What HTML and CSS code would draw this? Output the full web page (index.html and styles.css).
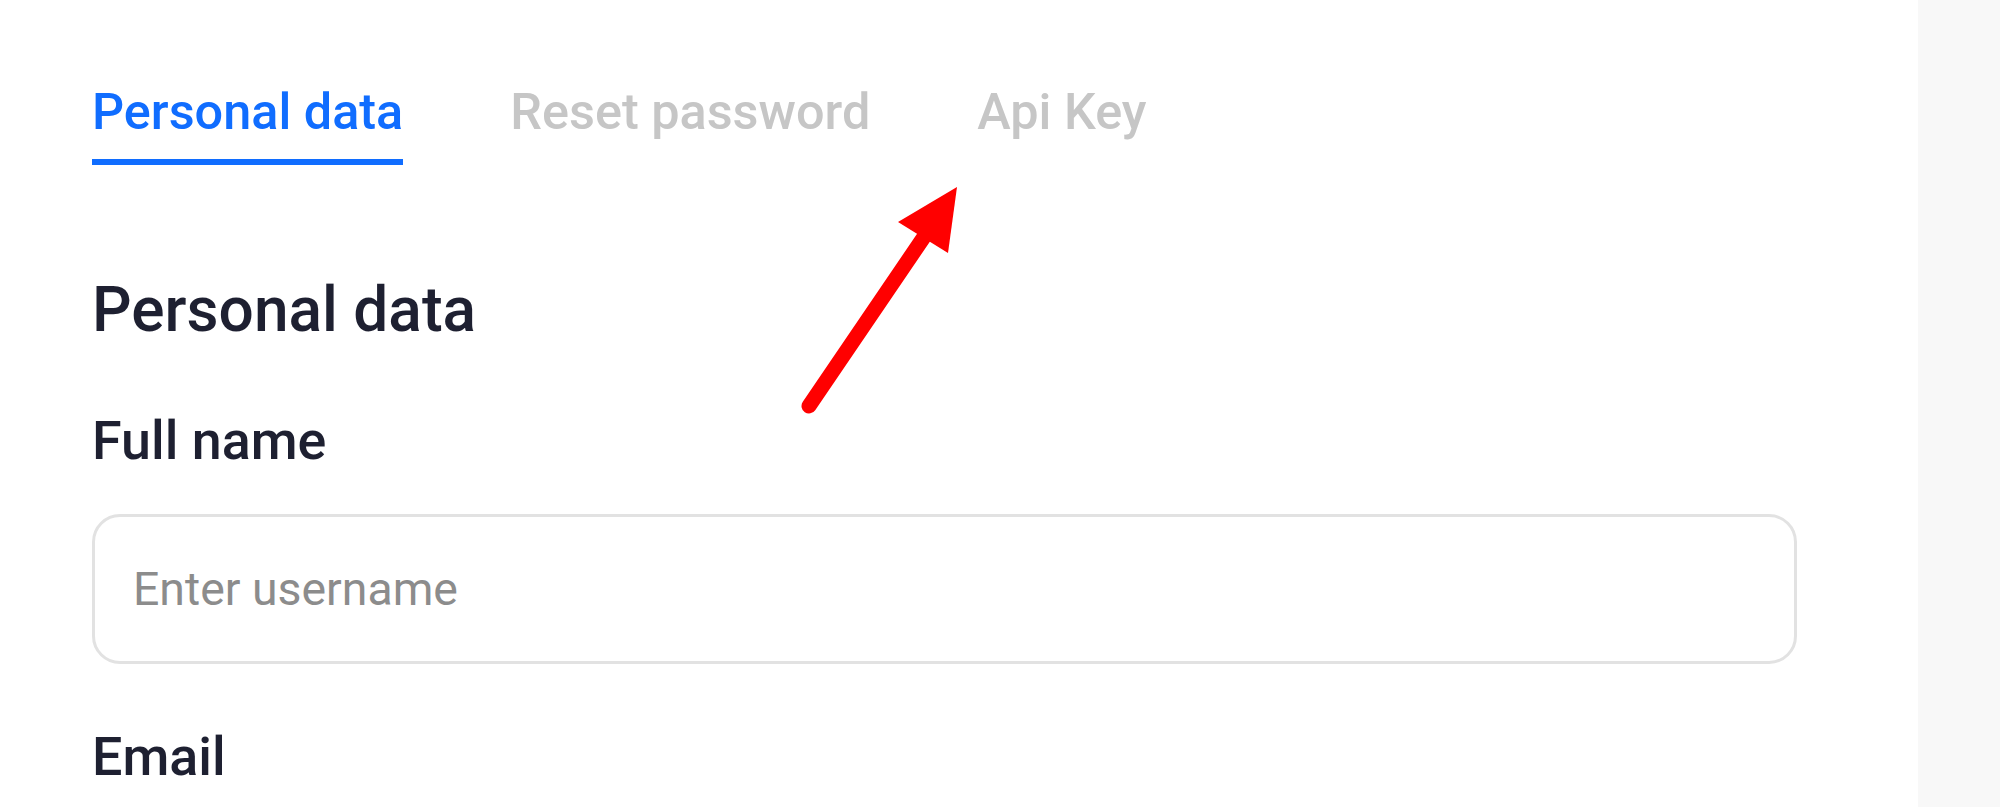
FILE: index.html
```html
<!DOCTYPE html>
<html lang="en">
<head>
  <meta charset="UTF-8">
  <title>Profile settings</title>
  <meta name="viewport" content="width=device-width, initial-scale=1">
  <link rel="stylesheet" href="styles.css">
</head>
<body>
  <div class="page">
    <main class="content">
      <nav class="tabs">
        <a class="tab active" href="#">Personal data</a>
        <a class="tab" href="#">Reset password</a>
        <a class="tab" href="#">Api Key</a>
      </nav>

      <h2 class="section-title">Personal data</h2>

      <div class="field">
        <label for="fullname">Full name</label>
        <input type="text" id="fullname" placeholder="Enter username">
      </div>

      <div class="field">
        <label for="email">Email</label>
      </div>
    </main>
    <aside class="side"></aside>
  </div>

  <!-- annotation arrow pointing at the Api Key tab -->
  <svg class="arrow" width="2000" height="807" viewBox="0 0 2000 807">
    <line x1="809" y1="406" x2="926" y2="234" stroke="#ff0000" stroke-width="15" stroke-linecap="round"/>
    <polygon points="957,187 898,222 948,253" fill="#ff0000"/>
  </svg>
</body>
</html>
```

FILE: styles.css
```css
body {
  margin: 0;
  font-family: Roboto, "Liberation Sans", sans-serif;
  background: #fff;
  color: #1e2031;
}

.page {
  display: flex;
  min-height: 807px;
}

.content {
  flex: 1;
  padding: 82px 121px 0 92px;
}

.side {
  width: 82px;
  background: #f8f8f8;
}

.tabs {
  display: flex;
  gap: 107px;
}

.tab {
  font-size: 50.4px;
  font-weight: 500;
  line-height: 60px;
  color: #c6c6c6;
  text-decoration: none;
  padding-bottom: 17px;
  border-bottom: 6px solid transparent;
}

.tab.active {
  color: #106dff;
  border-bottom-color: #106dff;
}

.section-title {
  margin: 107px 0 0;
  font-size: 62.2px;
  font-weight: 500;
  line-height: 76px;
}

.field label {
  display: block;
  margin-top: 62px;
  font-size: 53.8px;
  font-weight: 500;
  line-height: 62px;
}

.field input {
  display: block;
  box-sizing: border-box;
  width: 100%;
  height: 150px;
  margin-top: 42px;
  padding: 0 38px;
  border: 3px solid #e2e2e2;
  border-radius: 28px;
  font-family: inherit;
  font-size: 46.4px;
  color: #1e2031;
  outline: none;
}

.field input::placeholder {
  color: #8c8c8c;
}

.arrow {
  position: absolute;
  left: 0;
  top: 0;
  pointer-events: none;
}
```
